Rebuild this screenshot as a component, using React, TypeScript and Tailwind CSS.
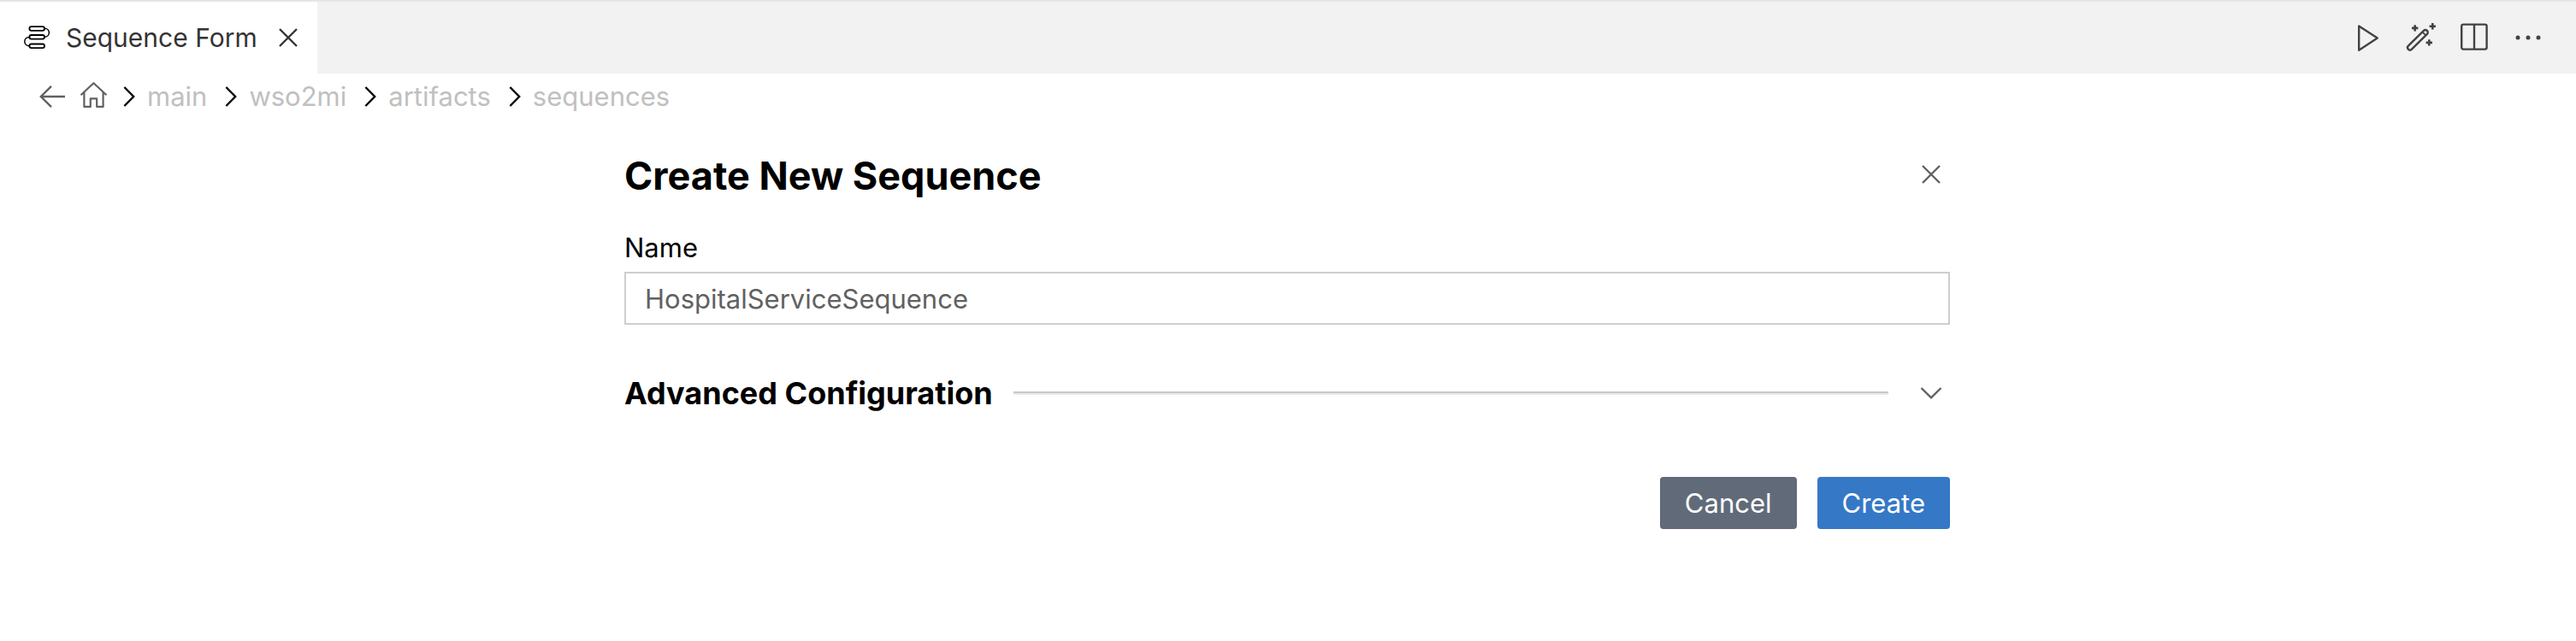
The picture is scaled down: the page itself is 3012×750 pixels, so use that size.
import type { ReactNode } from "react";

type IconProps = { children: ReactNode; className?: string; weight?: number };

function Icon({ children, className = "", weight = 2.4 }: IconProps) {
  return (
    <svg
      viewBox="0 0 36 36"
      className={`size-9 shrink-0 ${className}`}
      fill="none"
      stroke="currentColor"
      strokeWidth={weight}
      strokeLinejoin="round"
      aria-hidden="true"
    >
      {children}
    </svg>
  );
}

const CloseIcon = () => (
  <Icon weight={2.4}>
    <path d="M8 8 28 28M28 8 8 28" />
  </Icon>
);

const SequenceIcon = () => (
  <Icon weight={1.8} className="text-black">
    <rect x="9.400" y="5.200" width="17.600" height="4.600" rx="2.300" />
    <rect x="9.400" y="15" width="17.600" height="4.600" rx="2.300" />
    <rect x="9.400" y="25.500" width="17.600" height="4.600" rx="2.300" />
    <path d="M27 7.200c3.200 0 5.400 2.300 5.400 5s-2.200 5-5.400 5M9.400 17.400c-3.200 0-5.600 2.300-5.600 5.200s2.400 5.200 5.600 5.200" strokeWidth="1.500" />
  </Icon>
);

const PlayIcon = () => (
  <Icon>
    <path d="M9.200 4.400v28.400L30.800 18.600z" />
  </Icon>
);

const WandIcon = () => (
  <Icon weight={2.4}>
    <path d="M3.900 27.700 21.900 9.900a2.800 2.800 0 0 1 4 4L7.900 31.700a2.800 2.800 0 0 1-4-4z" />
    <path d="m20.400 11.400 4 4" strokeWidth="1.800" />
    <path d="M11.700 3.200v7.400M8 6.900h7.400M32.300 1V8.400M28.600 4.700H36M28.300 20.200v7.400M24.600 23.900H32" strokeWidth="2.600" />
  </Icon>
);

const SplitIcon = () => (
  <Icon>
    <rect x="3.200" y="2.600" width="29.400" height="29" rx="2" />
    <path d="M18 2.600V32" />
  </Icon>
);

const MoreIcon = () => (
  <Icon>
    <g fill="currentColor" stroke="none">
      <circle cx="6" cy="18" r="2.500" />
      <circle cx="18" cy="18" r="2.500" />
      <circle cx="30" cy="18" r="2.500" />
    </g>
  </Icon>
);

const BackIcon = () => (
  <Icon>
    <path d="M32 18H4.500M16 5.800 3.800 18 16 30.200" strokeLinejoin="miter" />
  </Icon>
);

const HomeIcon = () => (
  <Icon weight={2.2}>
    <path d="M2.500 16.200 17.500 2.200l15 14M6.400 13v16.900h7.400V20.400h7.400v9.500h7.400V13" />
  </Icon>
);

const ChevronRight = () => (
  <svg viewBox="0 0 14 26" className="h-[26px] w-[14px] shrink-0 text-black" fill="none" stroke="currentColor" strokeWidth="2.400" aria-hidden="true">
    <path d="M1.400 2 12.200 13 1.400 24" />
  </svg>
);

const ChevronDown = () => (
  <Icon weight={2.4}>
    <path d="M6.500 12 18 23.300 29.500 12" strokeLinejoin="miter" />
  </Icon>
);

const crumbs = ["main", "wso2mi", "artifacts", "sequences"];

const actions = [
  { label: "Run", icon: <PlayIcon /> },
  { label: "Generate", icon: <WandIcon /> },
  { label: "Split editor", icon: <SplitIcon /> },
  { label: "More actions", icon: <MoreIcon /> },
];

export default function App() {
  return (
    <div className="min-h-screen bg-white font-['Inter',sans-serif] text-black">
      <header className="flex h-[86px] items-stretch justify-between border-t-2 border-[#e5e5e5] bg-[#f2f2f2]">
        <div className="flex items-center gap-4 bg-white pr-4 pl-[25px] text-[#333333]">
          <SequenceIcon />
          <span className="pr-0.5 text-[30px] leading-10">Sequence Form</span>
          <button type="button" aria-label="Close tab">
            <CloseIcon />
          </button>
        </div>
        <div className="flex items-center gap-[27px] pr-[38px] text-[#424242]">
          {actions.map((a) => (
            <button key={a.label} type="button" aria-label={a.label}>
              {a.icon}
            </button>
          ))}
        </div>
      </header>

      <nav aria-label="Breadcrumb" className="flex h-[54px] items-center pl-11 text-[#616161]">
        <button type="button" aria-label="Back">
          <BackIcon />
        </button>
        <button type="button" aria-label="Home" className="ml-3">
          <HomeIcon />
        </button>
        <ol className="ml-4 flex items-center gap-[21px]">
          {crumbs.map((c) => (
            <li key={c} className="flex items-center gap-3.5">
              <ChevronRight />
              <a href="#" className="text-[31px] leading-10 text-[#c0c0c0]">
                {c}
              </a>
            </li>
          ))}
        </ol>
      </nav>

      <main className="pt-9 pr-0.5">
        <form className="mx-auto max-w-[1550px]" onSubmit={(e) => e.preventDefault()}>
          <div className="flex items-start justify-between pr-1">
            <h1 className="text-[45px] leading-[60px] font-bold">Create New Sequence</h1>
            <button type="button" aria-label="Close form" className="mt-2.5 text-[#616161]">
              <CloseIcon />
            </button>
          </div>

          <label htmlFor="name" className="mt-[34px] block text-[31px] leading-10">
            Name
          </label>
          <input
            id="name"
            type="text"
            defaultValue="HospitalServiceSequence"
            className="mt-2 block h-[62px] w-full border-2 border-[#cecece] bg-white px-[22px] text-[31px] text-[#616161] outline-none"
          />

          <div className="mt-14 flex items-center gap-6 pr-1">
            <h2 className="text-[36px] leading-[48px] font-bold">Advanced Configuration</h2>
            <hr className="h-1 grow border-t-2 border-b-2 border-t-[#c8c8c8] border-b-[#e8e8e8]" />
            <button type="button" aria-label="Expand advanced configuration" className="ml-2 text-[#616161]">
              <ChevronDown />
            </button>
          </div>

          <div className="mt-[74px] flex justify-end gap-6 text-[31px] leading-10 text-white">
            <button type="button" className="h-[61px] rounded bg-[#616a79] px-[29px]">
              Cancel
            </button>
            <button type="submit" className="h-[61px] rounded bg-[#3578c6] px-[29px]">
              Create
            </button>
          </div>
        </form>
      </main>
    </div>
  );
}
